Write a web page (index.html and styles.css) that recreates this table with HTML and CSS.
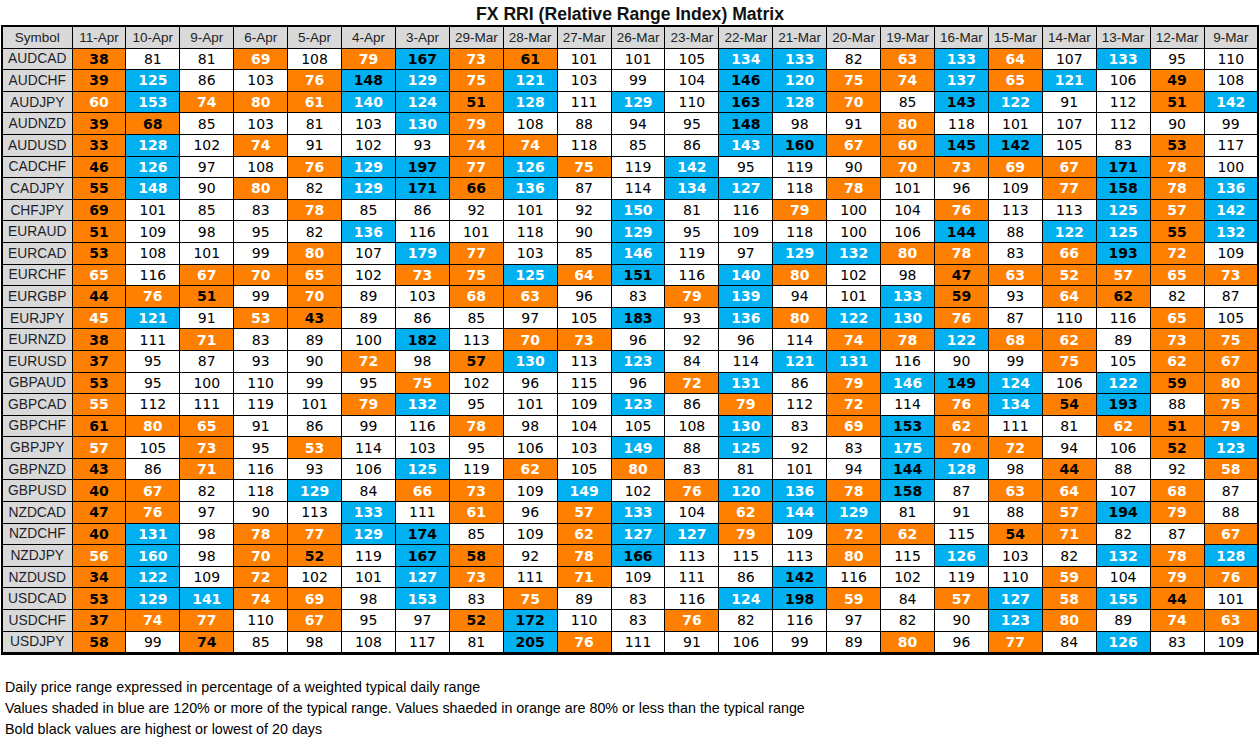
FILE: index.html
```html
<!DOCTYPE html>
<html lang="en">
<head>
<meta charset="utf-8">
<title>FX RRI (Relative Range Index) Matrix</title>
<link rel="stylesheet" href="styles.css">
</head>
<body>
<div class="page">
  <h1 class="title">FX RRI (Relative Range Index) Matrix</h1>
  <table class="matrix">
    <colgroup><col class="c-sym"></colgroup>
    <thead>
      <tr><th>Symbol</th><th>11-Apr</th><th>10-Apr</th><th>9-Apr</th><th>6-Apr</th><th>5-Apr</th><th>4-Apr</th><th>3-Apr</th><th>29-Mar</th><th>28-Mar</th><th>27-Mar</th><th>26-Mar</th><th>23-Mar</th><th>22-Mar</th><th>21-Mar</th><th>20-Mar</th><th>19-Mar</th><th>16-Mar</th><th>15-Mar</th><th>14-Mar</th><th>13-Mar</th><th>12-Mar</th><th>9-Mar</th></tr>
    </thead>
    <tbody>
      <tr><td class="sym">AUDCAD</td><td class="ok">38</td><td>81</td><td>81</td><td class="o">69</td><td>108</td><td class="o">79</td><td class="bk">167</td><td class="o">73</td><td class="ok">61</td><td>101</td><td>101</td><td>105</td><td class="b">134</td><td class="b">133</td><td>82</td><td class="o">63</td><td class="b">133</td><td class="o">64</td><td>107</td><td class="b">133</td><td>95</td><td>110</td></tr>
      <tr><td class="sym">AUDCHF</td><td class="ok">39</td><td class="b">125</td><td>86</td><td>103</td><td class="o">76</td><td class="bk">148</td><td class="b">129</td><td class="o">75</td><td class="b">121</td><td>103</td><td>99</td><td>104</td><td class="bk">146</td><td class="b">120</td><td class="o">75</td><td class="o">74</td><td class="b">137</td><td class="o">65</td><td class="b">121</td><td>106</td><td class="ok">49</td><td>108</td></tr>
      <tr><td class="sym">AUDJPY</td><td class="o">60</td><td class="b">153</td><td class="o">74</td><td class="o">80</td><td class="o">61</td><td class="b">140</td><td class="b">124</td><td class="ok">51</td><td class="b">128</td><td>111</td><td class="b">129</td><td>110</td><td class="bk">163</td><td class="b">128</td><td class="o">70</td><td>85</td><td class="bk">143</td><td class="b">122</td><td>91</td><td>112</td><td class="ok">51</td><td class="b">142</td></tr>
      <tr><td class="sym">AUDNZD</td><td class="ok">39</td><td class="ok">68</td><td>85</td><td>103</td><td>81</td><td>103</td><td class="b">130</td><td class="o">79</td><td>108</td><td>88</td><td>94</td><td>95</td><td class="bk">148</td><td>98</td><td>91</td><td class="o">80</td><td>118</td><td>101</td><td>107</td><td>112</td><td>90</td><td>99</td></tr>
      <tr><td class="sym">AUDUSD</td><td class="ok">33</td><td class="b">128</td><td>102</td><td class="o">74</td><td>91</td><td>102</td><td>93</td><td class="o">74</td><td class="o">74</td><td>118</td><td>85</td><td>86</td><td class="b">143</td><td class="bk">160</td><td class="o">67</td><td class="o">60</td><td class="bk">145</td><td class="bk">142</td><td>105</td><td>83</td><td class="ok">53</td><td>117</td></tr>
      <tr><td class="sym">CADCHF</td><td class="ok">46</td><td class="b">126</td><td>97</td><td>108</td><td class="o">76</td><td class="b">129</td><td class="bk">197</td><td class="o">77</td><td class="b">126</td><td class="o">75</td><td>119</td><td class="b">142</td><td>95</td><td>119</td><td>90</td><td class="o">70</td><td class="o">73</td><td class="o">69</td><td class="o">67</td><td class="bk">171</td><td class="o">78</td><td>100</td></tr>
      <tr><td class="sym">CADJPY</td><td class="ok">55</td><td class="b">148</td><td>90</td><td class="o">80</td><td>82</td><td class="b">129</td><td class="bk">171</td><td class="ok">66</td><td class="b">136</td><td>87</td><td>114</td><td class="b">134</td><td class="b">127</td><td>118</td><td class="o">78</td><td>101</td><td>96</td><td>109</td><td class="o">77</td><td class="bk">158</td><td class="o">78</td><td class="b">136</td></tr>
      <tr><td class="sym">CHFJPY</td><td class="ok">69</td><td>101</td><td>85</td><td>83</td><td class="o">78</td><td>85</td><td>86</td><td>92</td><td>101</td><td>92</td><td class="b">150</td><td>81</td><td>116</td><td class="o">79</td><td>100</td><td>104</td><td class="o">76</td><td>113</td><td>113</td><td class="b">125</td><td class="o">57</td><td class="b">142</td></tr>
      <tr><td class="sym">EURAUD</td><td class="ok">51</td><td>109</td><td>98</td><td>95</td><td>82</td><td class="b">136</td><td>116</td><td>101</td><td>118</td><td>90</td><td class="b">129</td><td>95</td><td>109</td><td>118</td><td>100</td><td>106</td><td class="bk">144</td><td>88</td><td class="b">122</td><td class="b">125</td><td class="ok">55</td><td class="b">132</td></tr>
      <tr><td class="sym">EURCAD</td><td class="ok">53</td><td>108</td><td>101</td><td>99</td><td class="o">80</td><td>107</td><td class="b">179</td><td class="o">77</td><td>103</td><td>85</td><td class="b">146</td><td>119</td><td>97</td><td class="b">129</td><td class="b">132</td><td class="o">80</td><td class="o">78</td><td>83</td><td class="o">66</td><td class="bk">193</td><td class="o">72</td><td>109</td></tr>
      <tr><td class="sym">EURCHF</td><td class="o">65</td><td>116</td><td class="o">67</td><td class="o">70</td><td class="o">65</td><td>102</td><td class="o">73</td><td class="o">75</td><td class="b">125</td><td class="o">64</td><td class="bk">151</td><td>116</td><td class="b">140</td><td class="o">80</td><td>102</td><td>98</td><td class="ok">47</td><td class="o">63</td><td class="o">52</td><td class="o">57</td><td class="o">65</td><td class="o">73</td></tr>
      <tr><td class="sym">EURGBP</td><td class="ok">44</td><td class="o">76</td><td class="ok">51</td><td>99</td><td class="o">70</td><td>89</td><td>103</td><td class="o">68</td><td class="o">63</td><td>96</td><td>83</td><td class="o">79</td><td class="b">139</td><td>94</td><td>101</td><td class="b">133</td><td class="ok">59</td><td>93</td><td class="o">64</td><td class="ok">62</td><td>82</td><td>87</td></tr>
      <tr><td class="sym">EURJPY</td><td class="o">45</td><td class="b">121</td><td>91</td><td class="o">53</td><td class="ok">43</td><td>89</td><td>86</td><td>85</td><td>97</td><td>105</td><td class="bk">183</td><td>93</td><td class="b">136</td><td class="o">80</td><td class="b">122</td><td class="b">130</td><td class="o">76</td><td>87</td><td>110</td><td>116</td><td class="o">65</td><td>105</td></tr>
      <tr><td class="sym">EURNZD</td><td class="ok">38</td><td>111</td><td class="o">71</td><td>83</td><td>89</td><td>100</td><td class="bk">182</td><td>113</td><td class="o">70</td><td class="o">73</td><td>96</td><td>92</td><td>96</td><td>114</td><td class="o">74</td><td class="o">78</td><td class="b">122</td><td class="o">68</td><td class="o">62</td><td>89</td><td class="o">73</td><td class="o">75</td></tr>
      <tr><td class="sym">EURUSD</td><td class="ok">37</td><td>95</td><td>87</td><td>93</td><td>90</td><td class="o">72</td><td>98</td><td class="ok">57</td><td class="b">130</td><td>113</td><td class="b">123</td><td>84</td><td>114</td><td class="b">121</td><td class="b">131</td><td>116</td><td>90</td><td>99</td><td class="o">75</td><td>105</td><td class="o">62</td><td class="o">67</td></tr>
      <tr><td class="sym">GBPAUD</td><td class="ok">53</td><td>95</td><td>100</td><td>110</td><td>99</td><td>95</td><td class="o">75</td><td>102</td><td>96</td><td>115</td><td>96</td><td class="o">72</td><td class="b">131</td><td>86</td><td class="o">79</td><td class="b">146</td><td class="bk">149</td><td class="b">124</td><td>106</td><td class="b">122</td><td class="ok">59</td><td class="o">80</td></tr>
      <tr><td class="sym">GBPCAD</td><td class="o">55</td><td>112</td><td>111</td><td>119</td><td>101</td><td class="o">79</td><td class="b">132</td><td>95</td><td>101</td><td>109</td><td class="b">123</td><td>86</td><td class="o">79</td><td>112</td><td class="o">72</td><td>114</td><td class="o">76</td><td class="b">134</td><td class="ok">54</td><td class="bk">193</td><td>88</td><td class="o">75</td></tr>
      <tr><td class="sym">GBPCHF</td><td class="ok">61</td><td class="o">80</td><td class="o">65</td><td>91</td><td>86</td><td>99</td><td>116</td><td class="o">78</td><td>98</td><td>104</td><td>105</td><td>108</td><td class="b">130</td><td>83</td><td class="o">69</td><td class="bk">153</td><td class="o">62</td><td>111</td><td>81</td><td class="o">62</td><td class="ok">51</td><td class="o">79</td></tr>
      <tr><td class="sym">GBPJPY</td><td class="o">57</td><td>105</td><td class="o">73</td><td>95</td><td class="o">53</td><td>114</td><td>103</td><td>95</td><td>106</td><td>103</td><td class="b">149</td><td>88</td><td class="b">125</td><td>92</td><td>83</td><td class="b">175</td><td class="o">70</td><td class="o">72</td><td>94</td><td>106</td><td class="ok">52</td><td class="b">123</td></tr>
      <tr><td class="sym">GBPNZD</td><td class="ok">43</td><td>86</td><td class="o">71</td><td>116</td><td>93</td><td>106</td><td class="b">125</td><td>119</td><td class="o">62</td><td>105</td><td class="o">80</td><td>83</td><td>81</td><td>101</td><td>94</td><td class="bk">144</td><td class="b">128</td><td>98</td><td class="ok">44</td><td>88</td><td>92</td><td class="o">58</td></tr>
      <tr><td class="sym">GBPUSD</td><td class="ok">40</td><td class="o">67</td><td>82</td><td>118</td><td class="b">129</td><td>84</td><td class="o">66</td><td class="o">73</td><td>109</td><td class="b">149</td><td>102</td><td class="o">76</td><td class="b">120</td><td class="b">136</td><td class="o">78</td><td class="bk">158</td><td>87</td><td class="o">63</td><td class="o">64</td><td>107</td><td class="o">68</td><td>87</td></tr>
      <tr><td class="sym">NZDCAD</td><td class="ok">47</td><td class="o">76</td><td>97</td><td>90</td><td>113</td><td class="b">133</td><td>111</td><td class="o">61</td><td>96</td><td class="o">57</td><td class="b">133</td><td>104</td><td class="o">62</td><td class="b">144</td><td class="b">129</td><td>81</td><td>91</td><td>88</td><td class="o">57</td><td class="bk">194</td><td class="o">79</td><td>88</td></tr>
      <tr><td class="sym">NZDCHF</td><td class="ok">40</td><td class="b">131</td><td>98</td><td class="o">78</td><td class="o">77</td><td class="b">129</td><td class="bk">174</td><td>85</td><td>109</td><td class="o">62</td><td class="b">127</td><td class="b">127</td><td class="o">79</td><td>109</td><td class="o">72</td><td class="o">62</td><td>115</td><td class="ok">54</td><td class="o">71</td><td>82</td><td>87</td><td class="o">67</td></tr>
      <tr><td class="sym">NZDJPY</td><td class="o">56</td><td class="b">160</td><td>98</td><td class="o">70</td><td class="ok">52</td><td>119</td><td class="bk">167</td><td class="ok">58</td><td>92</td><td class="o">78</td><td class="bk">166</td><td>113</td><td>115</td><td>113</td><td class="o">80</td><td>115</td><td class="b">126</td><td>103</td><td>82</td><td class="b">132</td><td class="o">78</td><td class="b">128</td></tr>
      <tr><td class="sym">NZDUSD</td><td class="ok">34</td><td class="b">122</td><td>109</td><td class="o">72</td><td>102</td><td>101</td><td class="b">127</td><td class="o">73</td><td>111</td><td class="o">71</td><td>109</td><td>111</td><td>86</td><td class="bk">142</td><td>116</td><td>102</td><td>119</td><td>110</td><td class="o">59</td><td>104</td><td class="o">79</td><td class="o">76</td></tr>
      <tr><td class="sym">USDCAD</td><td class="ok">53</td><td class="b">129</td><td class="b">141</td><td class="o">74</td><td class="o">69</td><td>98</td><td class="b">153</td><td>83</td><td class="o">75</td><td>89</td><td>83</td><td>116</td><td class="b">124</td><td class="bk">198</td><td class="o">59</td><td>84</td><td class="o">57</td><td class="b">127</td><td class="o">58</td><td class="b">155</td><td class="ok">44</td><td>101</td></tr>
      <tr><td class="sym">USDCHF</td><td class="ok">37</td><td class="o">74</td><td class="o">77</td><td>110</td><td class="o">67</td><td>95</td><td>97</td><td class="ok">52</td><td class="bk">172</td><td>110</td><td>83</td><td class="o">76</td><td>82</td><td>116</td><td>97</td><td>82</td><td>90</td><td class="b">123</td><td class="o">80</td><td>89</td><td class="o">74</td><td class="o">63</td></tr>
      <tr><td class="sym">USDJPY</td><td class="ok">58</td><td>99</td><td class="ok">74</td><td>85</td><td>98</td><td>108</td><td>117</td><td>81</td><td class="bk">205</td><td class="o">76</td><td>111</td><td>91</td><td>106</td><td>99</td><td>89</td><td class="o">80</td><td>96</td><td class="o">77</td><td>84</td><td class="b">126</td><td>83</td><td>109</td></tr>
    </tbody>
  </table>
  <div class="notes">
    <p>Daily price range expressed in percentage of a weighted typical daily range</p>
    <p>Values shaded in blue are 120% or more of the typical range. Values shaeded in orange are 80% or less than the typical range</p>
    <p>Bold black values are highest or lowest of 20 days</p>
  </div>
</div>
</body>
</html>
```
FILE: styles.css
```css
html, body {
  margin: 0;
  padding: 0;
  background: #ffffff;
}

body {
  font-family: "Liberation Sans", Arial, sans-serif;
  color: #000;
}

.page {
  width: 1260px;
}

.title {
  margin: 0;
  height: 25px;
  font-size: 17.6px;
  line-height: 28px;
  font-weight: bold;
  text-align: center;
  color: #111;
}

.matrix {
  margin-left: 1px;
  width: 1258px;
  table-layout: fixed;
  border-collapse: collapse;
  border: 2px solid #000;
  border-bottom-width: 3px;
}

.c-sym {
  width: 70px;
}

.matrix th,
.matrix td {
  border: 1px solid #000;
  padding: 0;
  height: 20.6px;
  text-align: center;
  vertical-align: middle;
  white-space: nowrap;
  overflow: hidden;
}

.matrix th {
  background: #d9d9d9;
  font-family: "Liberation Sans", Arial, sans-serif;
  font-weight: normal;
  font-size: 13.5px;
  color: #222;
}

.matrix td {
  font-family: "DejaVu Sans", Verdana, sans-serif;
  font-size: 14px;
  color: #000;
  background: #fff;
}

.matrix td.sym {
  background: #d9d9d9;
  font-family: "Liberation Sans", Arial, sans-serif;
  font-size: 13.8px;
  color: #1e1e2a;
}

.matrix td.o,
.matrix td.ok {
  background: #ff8000;
  font-weight: bold;
}

.matrix td.b,
.matrix td.bk {
  background: #00b0f0;
  font-weight: bold;
}

.matrix td.o,
.matrix td.b {
  color: #fff;
}

.matrix td.ok,
.matrix td.bk {
  color: #000;
}

.notes {
  margin-top: 22px;
  padding-left: 5px;
  font-family: "Liberation Sans", Arial, sans-serif;
  font-size: 14.3px;
  color: #000;
}

.notes p {
  margin: 0;
  line-height: 21px;
}
```
